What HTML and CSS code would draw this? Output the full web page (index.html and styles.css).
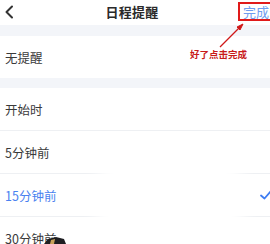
FILE: index.html
```html
<!DOCTYPE html>
<html lang="zh-CN">
<head>
<meta charset="utf-8">
<link rel="stylesheet" href="styles.css">
</head>
<body>
<div class="page">
  <header class="nav">
    <svg class="back" width="10" height="14" viewBox="0 0 10 14"><path d="M8 1.5 L2.5 7 L8 12.5" fill="none" stroke="#333" stroke-width="2" stroke-linecap="round" stroke-linejoin="round"/></svg>
    <div class="title">日程提醒</div>
    <div class="done">完成</div>
  </header>
  <div class="gap gap-top"></div>
  <div class="row">无提醒</div>
  <div class="gap"></div>
  <div class="row line">开始时</div>
  <div class="row line">5分钟前</div>
  <div class="row line active">15分钟前
    <svg class="check" width="12" height="10" viewBox="0 0 12 10"><path d="M1 5.5 L4.5 8.5 L11 1" fill="none" stroke="#3d7cf2" stroke-width="1.8" stroke-linecap="round" stroke-linejoin="round"/></svg>
  </div>
  <div class="row">30分钟前</div>

  <div class="blur"></div>
  <svg class="cursor" width="24" height="8" viewBox="0 0 24 8"><path d="M2 8 L6 3 L14 1 L22 3 L24 8 Z" fill="#1e1e22"/><path d="M9 4 L13 3 L12 8 L8 8 Z" fill="#c9a25a"/></svg>
  <svg class="arrow" width="30" height="28" viewBox="0 0 30 28"><path d="M2 26 L22 6" stroke="#d01818" stroke-width="1.3"/><path d="M25 3 L19 6 L22 9 Z" fill="#d01818" stroke="#d01818" stroke-width="1"/></svg>
  <div class="note">好了点击完成</div>
</div>
</body>
</html>
```
FILE: styles.css
```css
html, body {
  margin: 0;
  padding: 0;
  background: #fff;
}
body {
  font-family: "Noto Sans CJK SC", "Noto Sans", sans-serif;
  color: #333;
}
.page {
  position: relative;
  width: 270px;
  height: 244px;
  overflow: hidden;
}
.nav {
  height: 25px;
  display: flex;
  align-items: center;
  justify-content: space-between;
  padding-left: 4px;
}
.back {
  display: block;
  margin-top: -2px;
}
.title {
  font-size: 13px;
  font-weight: 700;
  color: #2a2a2a;
  margin-left: 12px;
  margin-top: -3px;
  letter-spacing: 0.2px;
}
.done {
  font-size: 13px;
  color: #6f9cf0;
  line-height: 13px;
  padding: 1px 0 1px 3px;
  border: 2px solid #e01a1a;
  border-right: none;
  margin-top: -3px;
  width: 27px;
}
.gap {
  height: 10px;
  background: #f3f5f9;
}
.gap-top {
  height: 11px;
}
.row {
  height: 42px;
  display: flex;
  align-items: center;
  justify-content: space-between;
  padding: 0 4px 0 5px;
  font-size: 12.5px;
  color: #3a3a3a;
}
.row.line {
  border-bottom: 1px solid #eef0f3;
}
.row.active {
  color: #4a82f0;
}
.check {
  margin-right: -6px;
}
.blur {
  position: absolute;
  left: 95px;
  top: 150px;
  width: 150px;
  height: 100px;
  background: #fff;
  border-radius: 40px;
  filter: blur(8px);
}
.cursor {
  position: absolute;
  left: 42px;
  top: 236px;
}
.arrow {
  position: absolute;
  left: 218px;
  top: 21px;
}
.note {
  position: absolute;
  left: 190px;
  top: 47px;
  font-size: 9.5px;
  font-weight: 700;
  color: #c81a1a;
  white-space: nowrap;
}
```
